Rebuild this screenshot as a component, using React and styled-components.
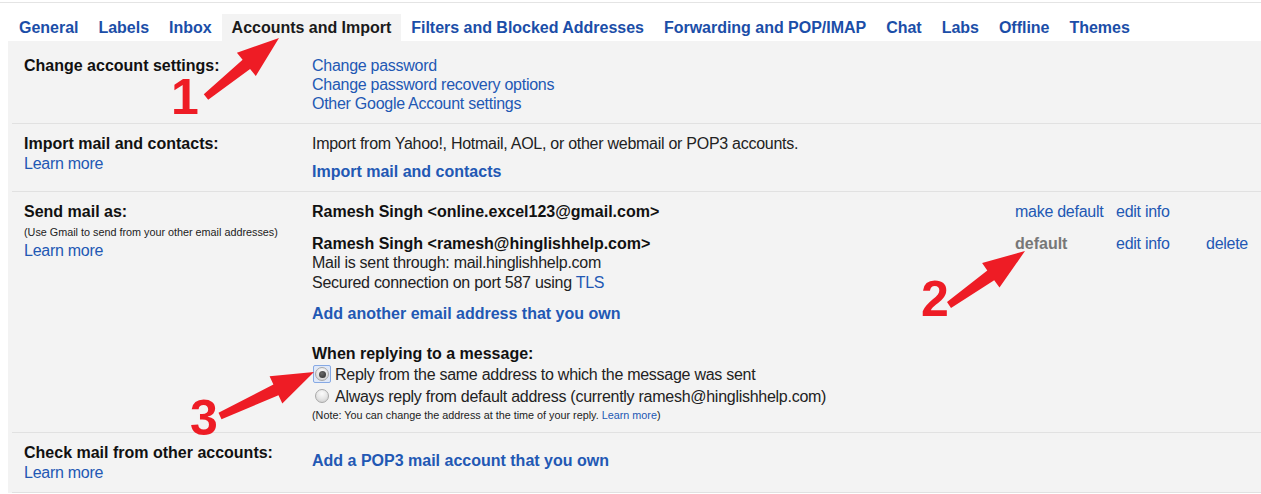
import React from 'react';
import styled, { createGlobalStyle } from 'styled-components';

const GlobalStyle = createGlobalStyle`
  html, body {
    margin: 0;
    background: #fff;
  }
  body {
    font-family: "Liberation Sans", Arial, sans-serif;
    color: #222;
  }
`;

const Page = styled.div`
  position: relative;
  width: 1261px;
  height: 494px;
  overflow: hidden;
  padding-top: 2px;
  box-sizing: border-box;
`;

const TopRule = styled.div`
  border-top: 1px solid #e4e4e4;
`;

const TabBar = styled.nav`
  display: flex;
  padding: 11px 0 0 9px;
`;

const Tab = styled.a`
  padding: 0 10px;
  height: 27px;
  line-height: 27px;
  font-size: 16px;
  font-weight: bold;
  letter-spacing: -0.02px;
  white-space: nowrap;
  text-decoration: none;
  color: ${(p) => (p.$active ? '#1a1a1a' : '#1b4ea8')};
  background: ${(p) => (p.$active ? '#f3f3f3' : 'transparent')};
`;

const Panel = styled.div`
  margin-left: 8px;
  padding-left: 4px;
  background: #f3f3f3;
`;

const Row = styled.section`
  display: grid;
  grid-template-columns: 288px 1fr;
  padding: ${(p) => (p.$first ? '15px' : '10px')} 0 10px 12px;
  border-bottom: 1px solid #e1e1e1;
`;

const Label = styled.div`
  display: flex;
  flex-direction: column;
  font-size: 16px;
  line-height: 19px;
`;

const LabelTitle = styled.span`
  font-weight: bold;
  color: #111;
`;

const Hint = styled.span`
  font-size: 10.8px;
  line-height: 13px;
  margin-top: 5px;
  color: #222;
`;

const SideLink = styled.a`
  margin-top: ${(p) => (p.$after === 'hint' ? '2px' : '1px')};
  color: #2258b4;
  letter-spacing: -0.27px;
  text-decoration: none;
`;

const Content = styled.div`
  display: flex;
  flex-direction: column;
  font-size: 16px;
  line-height: 19px;
  letter-spacing: -0.27px;
  color: #222;
`;

const Link = styled.a`
  color: #2258b4;
  text-decoration: none;
  font-weight: ${(p) => (p.$bold ? 'bold' : 'normal')};
  letter-spacing: ${(p) => (p.$bold ? '0' : '-0.27px')};
  margin-top: ${(p) => p.$gap || 0}px;
`;

const AccountRow = styled.div`
  display: grid;
  grid-template-columns: 703px 101px 90px auto;
  margin-top: ${(p) => p.$gap || 0}px;
`;

const Account = styled.div`
  display: flex;
  flex-direction: column;
`;

const AccountName = styled.span`
  font-weight: bold;
  letter-spacing: 0;
  color: #111;
`;

const Detail = styled.span`
  line-height: 19.5px;
`;

const Action = styled.a`
  color: ${(p) => (p.$current ? '#777' : '#2258b4')};
  font-weight: ${(p) => (p.$current ? 'bold' : 'normal')};
  letter-spacing: ${(p) => (p.$current ? '0' : '-0.27px')};
  text-decoration: none;
  white-space: nowrap;
`;

const SubHeading = styled.span`
  margin-top: 21px;
  font-weight: bold;
  letter-spacing: 0;
  color: #111;
`;

const RadioLine = styled.label`
  display: flex;
  align-items: center;
  height: 22px;
  margin-left: 1px;
`;

const RadioFrame = styled.span`
  width: 18px;
  height: 18px;
  box-sizing: border-box;
  border: 1px solid ${(p) => (p.$focused ? '#86a9e4' : 'transparent')};
  border-radius: 2px;
  background: ${(p) => (p.$focused ? '#dfe8f8' : 'transparent')};
  display: flex;
  align-items: center;
  justify-content: center;
  margin-right: 4px;
`;

const RadioCircle = styled.span`
  width: 14px;
  height: 14px;
  box-sizing: border-box;
  border-radius: 50%;
  border: 1px solid #a9a9a9;
  background: radial-gradient(circle at 50% 30%, #fbfbfb 0%, #e6e6e6 50%, #c9c9c9 100%);
  display: flex;
  align-items: center;
  justify-content: center;
`;

const RadioDot = styled.span`
  width: 7px;
  height: 7px;
  border-radius: 50%;
  background: radial-gradient(circle at 40% 35%, #6a6a6a, #2e2e2e);
`;

const Note = styled.span`
  margin-top: 2px;
  font-size: 10.8px;
  line-height: 13px;
  letter-spacing: 0;
  color: #222;
`;

const NoteLink = styled.a`
  color: #2258b4;
  text-decoration: none;
`;

const Marker = styled.span`
  position: absolute;
  left: ${(p) => p.$left}px;
  top: ${(p) => p.$top}px;
  font-family: "Liberation Sans", Arial, sans-serif;
  font-weight: bold;
  font-size: 50px;
  line-height: 1;
  color: #ee1c25;
  pointer-events: none;
`;

const Overlay = styled.svg`
  position: absolute;
  left: 0;
  top: 0;
  pointer-events: none;
`;

const arrowPoints = ([tx, ty], [px, py]) => {
  const len = Math.hypot(px - tx, py - ty);
  const dx = (px - tx) / len;
  const dy = (py - ty) / len;
  const nx = -dy;
  const ny = dx;
  const headLen = 42;
  const bx = px - dx * headLen;
  const by = py - dy * headLen;
  const pt = (x, y, w) => `${(x + nx * w).toFixed(1)},${(y + ny * w).toFixed(1)}`;
  return [
    pt(tx, ty, 3.5),
    pt(bx, by, 6),
    pt(bx, by, 15),
    `${px},${py}`,
    pt(bx, by, -15),
    pt(bx, by, -6),
    pt(tx, ty, -3.5),
  ].join(' ');
};

const arrows = [
  [[206, 97], [279, 38]],
  [[949, 305], [1025, 251]],
  [[220, 416], [314, 372]],
];

const tabs = [
  'General',
  'Labels',
  'Inbox',
  'Accounts and Import',
  'Filters and Blocked Addresses',
  'Forwarding and POP/IMAP',
  'Chat',
  'Labs',
  'Offline',
  'Themes',
];

const App = () => {
  return (
    <Page>
      <GlobalStyle />
      <TopRule />
      <TabBar>
        {tabs.map((t) => (
          <Tab key={t} href="#" $active={t === 'Accounts and Import'}>
            {t}
          </Tab>
        ))}
      </TabBar>
      <Panel>
        <Row $first>
          <Label>
            <LabelTitle>Change account settings:</LabelTitle>
          </Label>
          <Content>
            <Link href="#">Change password</Link>
            <Link href="#">Change password recovery options</Link>
            <Link href="#">Other Google Account settings</Link>
          </Content>
        </Row>

        <Row>
          <Label>
            <LabelTitle>Import mail and contacts:</LabelTitle>
            <SideLink href="#">Learn more</SideLink>
          </Label>
          <Content>
            <span>Import from Yahoo!, Hotmail, AOL, or other webmail or POP3 accounts.</span>
            <Link href="#" $bold $gap={9}>Import mail and contacts</Link>
          </Content>
        </Row>

        <Row>
          <Label>
            <LabelTitle>Send mail as:</LabelTitle>
            <Hint>(Use Gmail to send from your other email addresses)</Hint>
            <SideLink href="#" $after="hint">Learn more</SideLink>
          </Label>
          <Content>
            <AccountRow>
              <Account>
                <AccountName>Ramesh Singh &lt;online.excel123@gmail.com&gt;</AccountName>
              </Account>
              <Action href="#">make default</Action>
              <Action href="#">edit info</Action>
            </AccountRow>
            <AccountRow $gap={13}>
              <Account>
                <AccountName>Ramesh Singh &lt;ramesh@hinglishhelp.com&gt;</AccountName>
                <Detail>Mail is sent through: mail.hinglishhelp.com</Detail>
                <Detail>
                  Secured connection on port 587 using <NoteLink href="#">TLS</NoteLink>
                </Detail>
              </Account>
              <Action $current>default</Action>
              <Action href="#">edit info</Action>
              <Action href="#">delete</Action>
            </AccountRow>
            <Link href="#" $bold $gap={12}>Add another email address that you own</Link>
            <SubHeading>When replying to a message:</SubHeading>
            <RadioLine>
              <RadioFrame $focused>
                <RadioCircle>
                  <RadioDot />
                </RadioCircle>
              </RadioFrame>
              Reply from the same address to which the message was sent
            </RadioLine>
            <RadioLine>
              <RadioFrame>
                <RadioCircle />
              </RadioFrame>
              Always reply from default address (currently ramesh@hinglishhelp.com)
            </RadioLine>
            <Note>
              (Note: You can change the address at the time of your reply.{' '}
              <NoteLink href="#">Learn more</NoteLink>)
            </Note>
          </Content>
        </Row>

        <Row>
          <Label>
            <LabelTitle>Check mail from other accounts:</LabelTitle>
            <SideLink href="#">Learn more</SideLink>
          </Label>
          <Content>
            <Link href="#" $bold $gap={8}>Add a POP3 mail account that you own</Link>
          </Content>
        </Row>
      </Panel>

      <Overlay width="1261" height="494" viewBox="0 0 1261 494">
        {arrows.map(([tail, tip], i) => (
          <polygon key={i} points={arrowPoints(tail, tip)} fill="#ee1c25" />
        ))}
      </Overlay>
      <Marker $left={171} $top={72}>1</Marker>
      <Marker $left={921} $top={274}>2</Marker>
      <Marker $left={190} $top={393}>3</Marker>
    </Page>
  );
};

export default App;
